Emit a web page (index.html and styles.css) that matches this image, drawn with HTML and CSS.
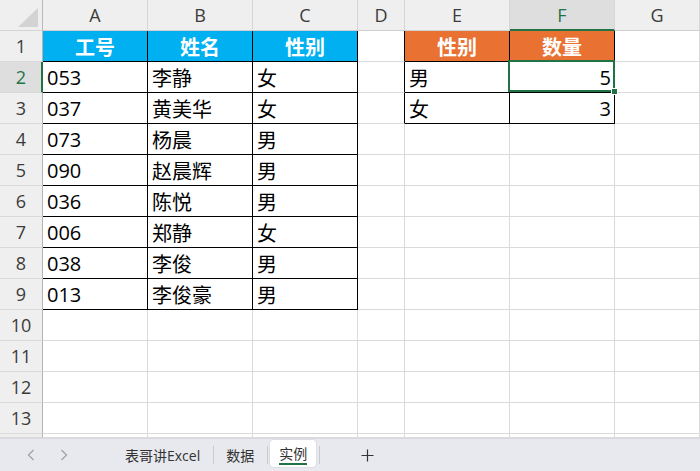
FILE: index.html
```html
<!DOCTYPE html>
<html lang="zh-CN">
<head>
<meta charset="utf-8">
<title>实例</title>
<link rel="stylesheet" href="styles.css">
</head>
<body>
<div class="sheet">
  <div class="corner"><svg width="43" height="31" viewBox="0 0 43 31"><polygon points="38,8 38,27 18,27" fill="#d3d3d3"/></svg></div>
  <div class="ch">A</div><div class="ch">B</div><div class="ch">C</div><div class="ch">D</div><div class="ch">E</div><div class="ch ch-sel">F</div><div class="ch">G</div>

  <div class="rh">1</div><div class="c t hb">工号</div><div class="c t hb">姓名</div><div class="c t hb">性别</div><div class="c dl"></div><div class="c t ho">性别</div><div class="c t ho">数量</div><div class="c"></div>
  <div class="rh rh-sel">2</div><div class="c t">053</div><div class="c t">李静</div><div class="c t">女</div><div class="c dl"></div><div class="c t">男</div><div class="c t num sel">5</div><div class="c"></div>
  <div class="rh">3</div><div class="c t">037</div><div class="c t">黄美华</div><div class="c t">女</div><div class="c dl"></div><div class="c t">女</div><div class="c t num">3</div><div class="c"></div>
  <div class="rh">4</div><div class="c t">073</div><div class="c t">杨晨</div><div class="c t">男</div><div class="c"></div><div class="c"></div><div class="c"></div><div class="c"></div>
  <div class="rh">5</div><div class="c t">090</div><div class="c t">赵晨辉</div><div class="c t">男</div><div class="c"></div><div class="c"></div><div class="c"></div><div class="c"></div>
  <div class="rh">6</div><div class="c t">036</div><div class="c t">陈悦</div><div class="c t">男</div><div class="c"></div><div class="c"></div><div class="c"></div><div class="c"></div>
  <div class="rh">7</div><div class="c t">006</div><div class="c t">郑静</div><div class="c t">女</div><div class="c"></div><div class="c"></div><div class="c"></div><div class="c"></div>
  <div class="rh">8</div><div class="c t">038</div><div class="c t">李俊</div><div class="c t">男</div><div class="c"></div><div class="c"></div><div class="c"></div><div class="c"></div>
  <div class="rh">9</div><div class="c t">013</div><div class="c t">李俊豪</div><div class="c t">男</div><div class="c"></div><div class="c"></div><div class="c"></div><div class="c"></div>
  <div class="rh">10</div><div class="c"></div><div class="c"></div><div class="c"></div><div class="c"></div><div class="c"></div><div class="c"></div><div class="c"></div>
  <div class="rh">11</div><div class="c"></div><div class="c"></div><div class="c"></div><div class="c"></div><div class="c"></div><div class="c"></div><div class="c"></div>
  <div class="rh">12</div><div class="c"></div><div class="c"></div><div class="c"></div><div class="c"></div><div class="c"></div><div class="c"></div><div class="c"></div>
  <div class="rh">13</div><div class="c"></div><div class="c"></div><div class="c"></div><div class="c"></div><div class="c"></div><div class="c"></div><div class="c"></div>
  <div class="rh"></div><div class="c"></div><div class="c"></div><div class="c"></div><div class="c"></div><div class="c"></div><div class="c"></div><div class="c"></div>
</div>
<div class="tabbar">
  <span class="chev chev-l"><svg width="8" height="12" viewBox="0 0 8 12"><polyline points="6.5,1 1.5,6 6.5,11" fill="none" stroke="#a0a0a0" stroke-width="1.2"/></svg></span>
  <span class="chev chev-r"><svg width="8" height="12" viewBox="0 0 8 12"><polyline points="1.5,1 6.5,6 1.5,11" fill="none" stroke="#a0a0a0" stroke-width="1.2"/></svg></span>
  <span class="tab tab-1">表哥讲Excel</span>
  <span class="sep sep-1"></span>
  <span class="tab tab-2">数据</span>
  <span class="sep sep-2"></span>
  <span class="tab tab-active"><span class="tab-label">实例</span></span>
  <span class="sep sep-3"></span>
  <span class="plus"><svg width="13" height="13" viewBox="0 0 13 13"><path d="M6.5 0.5V12.5M0.5 6.5H12.5" stroke="#333" stroke-width="1.2" fill="none"/></svg></span>
</div>
</body>
</html>
```
FILE: styles.css
```css
html, body {
  margin: 0;
  padding: 0;
  background: #ffffff;
  overflow: hidden;
}
body {
  width: 700px;
  height: 471px;
  font-family: "Open Sans", "Noto Sans CJK SC", sans-serif;
}
.sheet {
  display: grid;
  grid-template-columns: 43px 105px 105px 105px 47px 105px 105px 1fr;
  grid-template-rows: 31px repeat(13, 31px) 4px;
  height: 438px;
  overflow: hidden;
}
.sheet > div {
  box-sizing: border-box;
  overflow: hidden;
  white-space: nowrap;
}
.corner {
  background: #efefef;
  border-right: 1px solid #b9b9b9;
  border-bottom: 1px solid #d4d4d4;
}
.corner svg { display: block; }
.ch {
  background: #efefef;
  border-right: 1px solid #d6d6d6;
  border-bottom: 1px solid #d0d0d0;
  color: #3b3b3b;
  font-size: 18px;
  display: flex;
  align-items: center;
  justify-content: center;
}
.ch-sel {
  background: #dedede;
  color: #217346;
  border-bottom: 2px solid #217346;
  padding-top: 1px;
}
.rh {
  background: #efefef;
  border-right: 1px solid #b4b4b4;
  border-bottom: 1px solid #dadada;
  color: #3b3b3b;
  font-size: 18px;
  display: flex;
  align-items: center;
  justify-content: center;
}
.rh-sel {
  background: #dedede;
  color: #217346;
  border-right: 2px solid #217346;
  padding-left: 1px;
}
.c {
  border-right: 1px solid #dadada;
  border-bottom: 1px solid #dadada;
  font-size: 20px;
  color: #000;
  display: flex;
  align-items: center;
  padding: 0 4px;
}
.c.t {
  border-right-color: #000;
  border-bottom-color: #000;
}
.c.dl {
  border-right-color: #000;
}
.hb {
  background: #00b0f0;
  color: #fff;
  font-weight: bold;
  justify-content: center;
}
.ho {
  background: #e97132;
  color: #fff;
  font-weight: bold;
  justify-content: center;
}
.num {
  justify-content: flex-end;
  padding-right: 3px;
}
.sheet > .sel {
  position: relative;
  overflow: visible;
}
.sel::after {
  content: "";
  position: absolute;
  left: -2px;
  top: -2px;
  right: -1px;
  bottom: 0;
  border: 2px solid #217346;
  pointer-events: none;
}
.sel::before {
  content: "";
  position: absolute;
  right: -3px;
  bottom: -2px;
  width: 5px;
  height: 5px;
  background: #217346;
  outline: 1px solid #fff;
  z-index: 2;
}
.tabbar {
  height: 33px;
  box-sizing: border-box;
  background: #e7e9ee;
  border-top: 1px solid #d9dbe0;
  display: flex;
  align-items: center;
  font-size: 14px;
  color: #333;
}
.chev { display: flex; }
.chev-l { margin-left: 27px; }
.chev-r { margin-left: 25px; }
.tab { white-space: nowrap; }
.tab-1 { margin-left: 57px; }
.sep {
  width: 1px;
  height: 18px;
  background: #c8cacf;
}
.sep-1 { margin-left: 13px; }
.tab-2 { margin-left: 12px; }
.sep-2 { margin-left: 13px; }
.tab-active {
  margin-left: 2px;
  align-self: flex-start;
  margin-top: 1px;
  height: 27px;
  box-sizing: border-box;
  padding: 0 9px;
  background: #fff;
  border-radius: 4px;
  box-shadow: 0 0 0 1px #dcdee3;
  display: flex;
  align-items: center;
}
.tab-label {
  border-bottom: 2px solid #217346;
  line-height: 19px;
  margin-top: 2px;
}
.sep-3 { margin-left: 3px; }
.plus {
  display: flex;
  margin-left: 41px;
}
```
